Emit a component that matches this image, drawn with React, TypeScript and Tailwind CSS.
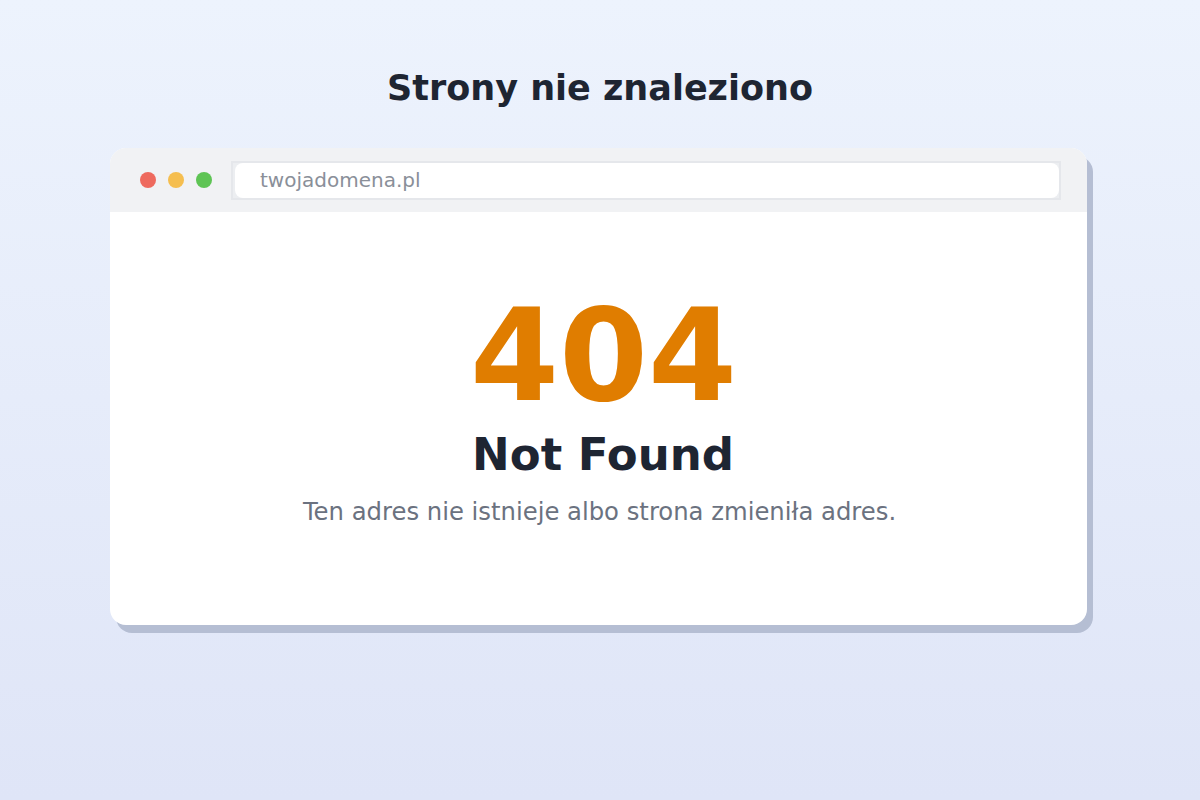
import React from 'react';

const font = { fontFamily: '"DejaVu Sans", "Noto Sans", sans-serif' };

export default function App() {
  return (
    <div
      className="w-full h-[800px] bg-gradient-to-b from-[#edf3fd] to-[#dfe5f7] flex flex-col items-center"
      style={font}
    >
      <h1 className="mt-[67px] text-[35px] leading-[42px] font-bold text-[#1e2532]">
        Strony nie znaleziono
      </h1>

      <div className="mt-[39px] mr-[3px] w-[977px] h-[477px] rounded-2xl bg-white shadow-[6px_8px_0_#b5bed3] flex flex-col overflow-hidden">
        <div className="h-16 bg-[#f1f2f4] flex items-center pl-[30px] pr-[26px]">
          <div className="flex gap-[12px]">
            <span className="w-[16px] h-[16px] rounded-full bg-[#ee6a5e]" />
            <span className="w-[16px] h-[16px] rounded-full bg-[#f5be4f]" />
            <span className="w-[16px] h-[16px] rounded-full bg-[#5ec454]" />
          </div>
          <div className="ml-[19px] flex-1 h-[39px] border-2 border-[#e5e7eb] bg-[#eceef1]">
            <div className="h-full ml-[2px] rounded-lg bg-white flex items-center pl-[25px] text-[20px] text-[#8a8f99]">
              twojadomena.pl
            </div>
          </div>
        </div>

        <div className="flex-1 flex flex-col items-center pt-[80px]">
          <div className="ml-[10px] text-[128px] leading-none font-bold text-[#e07d00]">404</div>
          <div className="mt-[12px] ml-[9px] text-[45px] leading-none font-bold text-[#1e2532]">Not Found</div>
          <p className="mt-[17px] ml-[2px] text-[24.3px] leading-[36px] text-[#6b7280]">
            Ten adres nie istnieje albo strona zmieniła adres.
          </p>
        </div>
      </div>
    </div>
  );
}
